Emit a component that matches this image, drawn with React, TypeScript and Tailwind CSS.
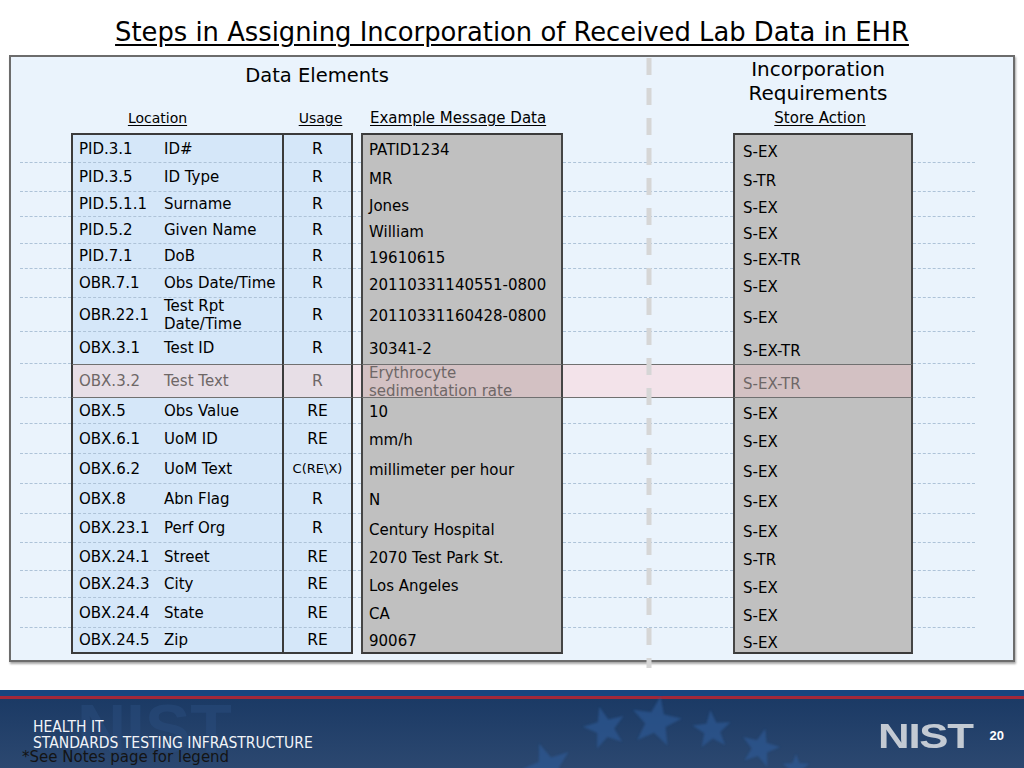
import React from 'react'
import clsx from 'clsx'

type Row = {
  code: string
  name: React.ReactNode
  usage: string
  data: React.ReactNode
  action: string
  h: string
  hl?: boolean
}

const rows: Row[] = [
  { code: 'PID.3.1', name: 'ID#', usage: 'R', data: 'PATID1234', action: 'S-EX', h: 'h-[30px]' },
  { code: 'PID.3.5', name: 'ID Type', usage: 'R', data: 'MR', action: 'S-TR', h: 'h-[29px]' },
  { code: 'PID.5.1.1', name: 'Surname', usage: 'R', data: 'Jones', action: 'S-EX', h: 'h-[25px]' },
  { code: 'PID.5.2', name: 'Given Name', usage: 'R', data: 'William', action: 'S-EX', h: 'h-[27px]' },
  { code: 'PID.7.1', name: 'DoB', usage: 'R', data: '19610615', action: 'S-EX-TR', h: 'h-[25px]' },
  { code: 'OBR.7.1', name: 'Obs Date/Time', usage: 'R', data: '20110331140551-0800', action: 'S-EX', h: 'h-[29px]' },
  {
    code: 'OBR.22.1',
    name: (
      <span className="leading-[16px]">
        Test Rpt
        <br />
        Date/Time
      </span>
    ),
    usage: 'R',
    data: '20110331160428-0800',
    action: 'S-EX',
    h: 'h-[34px]',
  },
  { code: 'OBX.3.1', name: 'Test ID', usage: 'R', data: '30341-2', action: 'S-EX-TR', h: 'h-[32px]' },
  {
    code: 'OBX.3.2',
    name: 'Test Text',
    usage: 'R',
    data: (
      <span className="leading-[17px]">
        Erythrocyte
        <br />
        sedimentation rate
      </span>
    ),
    action: 'S-EX-TR',
    h: 'h-[34px]',
    hl: true,
  },
  { code: 'OBX.5', name: 'Obs Value', usage: 'RE', data: '10', action: 'S-EX', h: 'h-[26px]' },
  { code: 'OBX.6.1', name: 'UoM ID', usage: 'RE', data: 'mm/h', action: 'S-EX', h: 'h-[30px]' },
  { code: 'OBX.6.2', name: 'UoM Text', usage: 'C(RE\\X)', data: 'millimeter per hour', action: 'S-EX', h: 'h-[30px]' },
  { code: 'OBX.8', name: 'Abn Flag', usage: 'R', data: 'N', action: 'S-EX', h: 'h-[30px]' },
  { code: 'OBX.23.1', name: 'Perf Org', usage: 'R', data: 'Century Hospital', action: 'S-EX', h: 'h-[29px]' },
  { code: 'OBX.24.1', name: 'Street', usage: 'RE', data: '2070 Test Park St.', action: 'S-TR', h: 'h-[28px]' },
  { code: 'OBX.24.3', name: 'City', usage: 'RE', data: 'Los Angeles', action: 'S-EX', h: 'h-[27px]' },
  { code: 'OBX.24.4', name: 'State', usage: 'RE', data: 'CA', action: 'S-EX', h: 'h-[30px]' },
  { code: 'OBX.24.5', name: 'Zip', usage: 'RE', data: '90067', action: 'S-EX', h: 'h-[26px]' },
]

function Dash() {
  return <div className="border-t border-dashed border-[#aec3d8]" />
}

function Cell({ className, inner, dash, children }: { className?: string; inner?: string; dash?: boolean; children?: React.ReactNode }) {
  return (
    <div className={clsx('flex flex-col', className)}>
      <div className={clsx('flex min-h-0 flex-1 items-center', inner)}>{children}</div>
      {dash ? <Dash /> : null}
    </div>
  )
}

function starPoints(cx: number, cy: number, r: number, rot: number) {
  const pts: string[] = []
  for (let k = 0; k < 10; k++) {
    const rad = k % 2 === 0 ? r : r * 0.42
    const a = ((rot - 90 + k * 36) * Math.PI) / 180
    pts.push(`${(cx + rad * Math.cos(a)).toFixed(1)},${(cy + rad * Math.sin(a)).toFixed(1)}`)
  }
  return pts.join(' ')
}

const stars = [
  { x: 548, y: 78, r: 26, rot: -20 },
  { x: 605, y: 38, r: 22, rot: -15 },
  { x: 656, y: 32, r: 26, rot: 10 },
  { x: 712, y: 40, r: 20, rot: -5 },
  { x: 760, y: 58, r: 20, rot: 15 },
  { x: 796, y: 78, r: 14, rot: 0 },
]

export default function App() {
  return (
    <div className="h-[768px] w-[1024px] overflow-hidden bg-white font-['DejaVu_Sans',Verdana,sans-serif] text-black">
      <div className="h-[55px] pt-[17px] text-center text-[25.8px] leading-[30px] underline underline-offset-[3px]">
        Steps in Assigning Incorporation of Received Lab Data in EHR
      </div>

      <div className="relative ml-[9px] h-[607px] w-[1006px] border-2 border-[#6c6c6c] bg-[#eaf3fc] shadow-[1px_2px_2px_rgba(0,0,0,0.35)]">
        <div className="flex h-[48px]">
          <div className="w-[612px] pt-[7px] text-center text-[19.5px] leading-[24px]">Data Elements</div>
          <div className="flex-1 text-center text-[20px] leading-[24px]">
            Incorporation
            <br />
            Requirements
          </div>
        </div>

        <div className="flex h-[28px] pl-[9px] pt-[4px] text-[14px] leading-[18px]">
          <div className="w-[51px]" />
          <div className="w-[211px] pr-[38px] text-center underline underline-offset-2">Location</div>
          <div className="w-[71px] pl-[6px] text-center underline underline-offset-2">Usage</div>
          <div className="w-[8px]" />
          <div className="w-[202px] whitespace-nowrap pl-[9px] text-[15px] underline underline-offset-2">Example Message Data</div>
          <div className="w-[170px]" />
          <div className="w-[180px] pr-[6px] text-center text-[15px] underline underline-offset-2">Store Action</div>
        </div>

        <div className="flex flex-col text-[15px] leading-[18px]">
          {rows.map((r, i) => {
            const first = i === 0
            const last = i === rows.length - 1
            const nextHl = rows[i + 1]?.hl
            const outerDash = !last
            const innerDash = !last && !r.hl && !nextHl
            const edge = clsx(first && 'border-t-2 border-t-[#3b3b3b]', last && 'border-b-2 border-b-[#3b3b3b]')
            const hlY = r.hl ? 'border-y border-y-[#707070]' : ''
            const gap = clsx(hlY, r.hl && 'bg-[#f3e3ea]')
            const blue = r.hl ? 'bg-[#e7dee6] text-[#6e6767]' : 'bg-[#d5e7f9]'
            const gray = r.hl ? 'bg-[#d3c1c3] text-[#6e6767]' : 'bg-[#c0c0c0]'
            return (
              <div key={r.code} className={clsx('flex pl-[9px]', r.h)}>
                <Cell className="w-[51px]" dash={outerDash} />
                <Cell className={clsx('w-[211px] border-l-2 border-l-[#3b3b3b]', blue, edge, hlY)} dash={innerDash}>
                  <span className="w-[91px] whitespace-nowrap pl-[6px]">{r.code}</span>
                  <span className="flex-1 whitespace-nowrap">{r.name}</span>
                </Cell>
                <Cell
                  className={clsx('w-[71px] border-x-2 border-x-[#3b3b3b]', blue, edge, hlY)}
                  inner="justify-center"
                  dash={innerDash}
                >
                  {r.usage.length > 2 ? <span className="text-[13px]">{r.usage}</span> : <span className="text-[15.5px]">{r.usage}</span>}
                </Cell>
                <Cell className={clsx('w-[8px]', gap)} dash={innerDash} />
                <Cell className={clsx('w-[202px] border-x-2 border-x-[#454545]', gray, edge, hlY)} inner="pl-[6px]">
                  <span className="translate-y-[1px] whitespace-nowrap">{r.data}</span>
                </Cell>
                <Cell className={clsx('w-[170px]', gap)} dash={innerDash} />
                <Cell className={clsx('w-[180px] border-x-2 border-x-[#454545]', gray, edge, hlY)} inner="pl-[8px]">
                  <span className="translate-y-[3px] whitespace-nowrap">{r.action}</span>
                </Cell>
                <Cell className="w-[62px]" dash={outerDash} />
              </div>
            )
          })}
        </div>

        <svg className="absolute left-[635px] top-[1px] h-[610px] w-[6px]" viewBox="0 0 6 610">
          <line x1="3" y1="0" x2="3" y2="610" stroke="#d6d6d6" strokeWidth="5" strokeDasharray="17 13" />
        </svg>
      </div>

      <div className="relative mt-[28px] h-[78px] overflow-hidden">
        <div className="h-[6px] bg-[#17457f]" />
        <div className="h-[3px] bg-[#a2283a]" />
        <div className="flex h-[69px] items-center justify-between bg-linear-to-b from-[#1b3a65] to-[#2c4870] pl-[33px] pr-[20px]">
          <div className="relative z-10 pt-[2px] font-['DejaVu_Sans_Condensed','Liberation_Sans_Narrow',sans-serif] text-[15.5px] leading-[16px] text-[#f2f4f8]">
            HEALTH IT
            <br />
            STANDARDS TESTING INFRASTRUCTURE
          </div>
          <div className="relative z-10 flex items-center gap-[17px] pt-[4px]">
            <span className="inline-block origin-right scale-x-[1.25] font-['Liberation_Sans',Arial,sans-serif] text-[35px] font-bold leading-none tracking-[-1px] text-[#c3cad3]">
              NIST
            </span>
            <span className="font-['Liberation_Sans',Arial,sans-serif] text-[13px] font-bold text-white">20</span>
          </div>
        </div>

        <svg className="absolute left-0 top-0 h-[78px] w-[1024px]" viewBox="0 0 1024 78">
          <defs>
            <filter id="soft">
              <feGaussianBlur stdDeviation="1.2" />
            </filter>
          </defs>
          <g fill="#2d5c9a" opacity="0.6" filter="url(#soft)">
            {stars.map((s) => (
              <polygon key={s.x} points={starPoints(s.x, s.y, s.r, s.rot)} />
            ))}
          </g>
        </svg>

        <div className="absolute left-[77px] top-[4px] font-['Liberation_Sans',Arial,sans-serif] text-[68px] font-bold leading-none text-[#2a4d7e] opacity-50">
          NIST
        </div>

        <div className="absolute left-[22px] top-[58px] z-20 text-[15px] leading-[18px] text-[#141414]">*See Notes page for legend</div>
      </div>
    </div>
  )
}
